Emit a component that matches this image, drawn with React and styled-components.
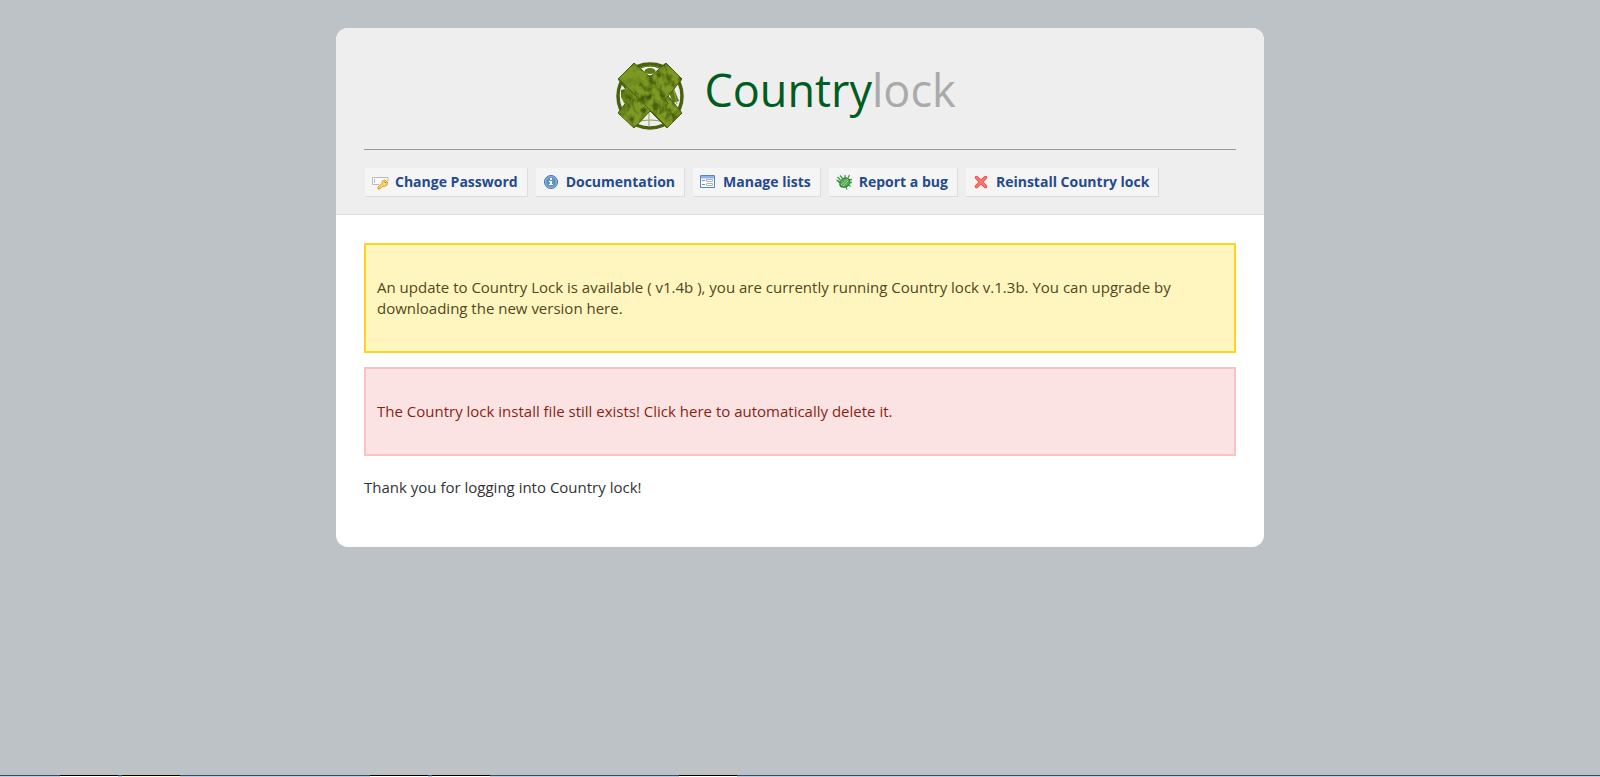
import React from 'react';
import styled, { createGlobalStyle } from 'styled-components';

const GlobalStyle = createGlobalStyle`
  *, *::before, *::after { box-sizing: border-box; }
  body {
    margin: 0;
    background: #bdc2c6;
    color: #333;
    font: 15px/21px "Open Sans", "Noto Sans", sans-serif;
  }
`;

const Page = styled.div`
  min-height: 100vh;
  display: flex;
  flex-direction: column;
  align-items: center;
`;

const Card = styled.main`
  width: 58%;
  min-width: 320px;
  margin: 28px 0;
  border-radius: 12px;
  background: #fff;
  overflow: hidden;
`;

const Header = styled.header`
  padding: 28px 28px 17px;
  background: #eee;
  border-bottom: 1px solid #ddd;
`;

const Brand = styled.a`
  display: flex;
  justify-content: center;
  align-items: center;
  gap: 20px;
  height: 80px;
  margin-bottom: 13px;
  padding-right: 28px;
  text-decoration: none;
`;

const Wordmark = styled.span`
  padding-bottom: 12px;
  font: 45px/64px "Open Sans", sans-serif;
  color: #005c20;
`;

const Muted = styled.span`
  color: #aaa;
`;

const Rule = styled.hr`
  height: 1px;
  margin: 0 0 18px;
  border: 0;
  background: #999;
`;

const Toolbar = styled.nav`
  display: flex;
  flex-wrap: wrap;
  gap: 8px;
  padding-left: 1px;
`;

const ToolLink = styled.a`
  display: flex;
  align-items: center;
  gap: 6px;
  height: 29px;
  padding: 0 9px 0 7px;
  background: #f5f5f5;
  border-right: 1px solid #ddd;
  border-bottom: 1px solid #ddd;
  color: #264a8c;
  font: bold 14px/21px "Open Sans", "DejaVu Sans", sans-serif;
  text-decoration: none;
  white-space: nowrap;
`;

const ToolLabel = styled.span`
  padding-bottom: 2px;
`;

const Content = styled.section`
  padding: 28px;
`;

const tones = {
  notice: { line: '#ffd324', fill: '#fff6bf', ink: '#514721' },
  error: { line: '#fbc2c4', fill: '#fbe3e4', ink: '#8a1f11' },
};

const Alert = styled.div`
  margin-bottom: 14px;
  padding: 32px 11px;
  border: 2px solid ${(p) => tones[p.$tone].line};
  background: ${(p) => tones[p.$tone].fill};
  color: ${(p) => tones[p.$tone].ink};
`;

const AlertText = styled.p`
  margin: 0;
`;

const Greeting = styled.p`
  margin: 21px 0;
`;

const TaskStrip = styled.footer`
  display: flex;
  width: 100%;
  height: 2px;
  margin-top: auto;
  padding-left: 60px;
  background: #b9cde5;
  border-top: 1px solid #3d4c5f;
`;

const TaskTab = styled.span`
  width: 58px;
  height: 2px;
  margin: -1px ${(p) => p.$gap}px 0 0;
  border-top: 1px solid #000;
  background: ${(p) => p.$fill};
`;

const Emblem = () => (
  <svg width="68" height="68" viewBox="0 0 68 68" aria-hidden="true">
    <defs>
      <filter id="grain" x="0" y="0" width="100%" height="100%" colorInterpolationFilters="sRGB">
        <feTurbulence type="fractalNoise" baseFrequency="0.16 0.12" numOctaves="4" seed="5" />
        <feColorMatrix values="0 0 0 0 0.26  0 0 0 0 0.34  0 0 0 0 0.03  2.6 0 0 0 -1.05" />
        <feComposite in2="SourceGraphic" operator="in" result="spots" />
        <feMerge>
          <feMergeNode in="SourceGraphic" />
          <feMergeNode in="spots" />
        </feMerge>
      </filter>
    </defs>
    <circle cx="34" cy="34" r="32" fill="#eee" stroke="#4a610d" strokeWidth="3.5" />
    <ellipse cx="34" cy="9" rx="12" ry="5" fill="#f6f8ef" stroke="#5f7918" strokeWidth="1.5" />
    <ellipse cx="34" cy="9" rx="5.5" ry="3" fill="#5f7918" />
    <path d="M63 39l-5-12-5 4 4 10z" fill="#5d7a13" />
    <path d="M20 60q14-4 28 0M33 50v15M57 24l4 18" fill="none" stroke="#8b9f55" />
    <g filter="url(#grain)">
      <path
        d="M18 1L34 15 50 1 66 17 52 34 66 51 51 66 34 49 18 66 2 51 15 34 2 17z"
        fill="#7c9a24"
        stroke="#4b600f"
      />
      <path d="M5 28l12-2v17l-9-2-3-6z" fill="#67841a" />
    </g>
    <path d="M18 2L31 14 16 30 3 17z" fill="#7c9a24" fillOpacity="0.7" />
    <path d="M3 17L52 66" stroke="#4b600f" />
    <path d="M52 34l-3 4 3 3-2 4" fill="none" stroke="#4b600f" />
  </svg>
);

const PasswordIcon = () => (
  <svg width="17" height="16" viewBox="0 0 17 16" aria-hidden="true">
    <path d="M.5 3.5H16v5L8 11H.5z" fill="#fafafa" />
    <path d="M.5 10.5v-7H16v4M.5 10.5H7M2.5 5v4" fill="none" stroke="#bbb" />
    <path
      d="M10 7.500l2.500-1.500 3 2-.5 3-2.500 1.500-1.500-.5-1.500 1.500-1.500.5v1H6v-2l4-3.500z"
      fill="#fbd565"
      stroke="#d99a35"
    />
    <path d="M12.5 7.5l1.5 1.5" stroke="#a87726" />
  </svg>
);

const InfoIcon = () => (
  <svg width="17" height="16" viewBox="0 0 17 16" aria-hidden="true">
    <circle cx="8" cy="8" r="6.5" fill="#5f93cb" stroke="#4673ab" />
    <circle cx="8" cy="8" r="5.5" fill="none" stroke="#a9c6e6" strokeWidth="0.7" />
    <path d="M7 4h2v2H7zM6 7h3v3h1v1H6v-1h1V8H6z" fill="#fff" />
  </svg>
);

const ListsIcon = () => (
  <svg width="17" height="16" viewBox="0 0 17 16" aria-hidden="true">
    <path d="M.5 1.500h14v12H.5z" fill="#fff" stroke="#5c83bb" />
    <path d="M1 2h13v2.500H1z" fill="#8db3e8" />
    <path d="M2 6.500h3M2 10.500h3" stroke="#5b8fd6" />
    <path d="M6.500 5.500h6v2h-6zM6.500 9.500h6v2h-6z" fill="#fff" stroke="#b4b4b4" />
  </svg>
);

const BugIcon = () => (
  <svg width="17" height="16" viewBox="0 0 17 16" aria-hidden="true">
    <path
      d="M4.500 6L1.500 3M7 5L4 1.500M9 4V1M12 4l1.500-3M13 6l3-.5M13.500 8.500H16M12.500 11l2 1.500M10 13l1 2.500M6 12l-1 1.500M4 9L1 6.500M4 7.500L.5 6"
      stroke="#39a33c"
      strokeWidth="1.3"
      fill="none"
    />
    <path d="M4 12q-1-5 3-7.500 4-2 6.500 1 1.500 4-1.500 6.500-3.500 3-8 0z" fill="#5da65a" stroke="#287a2c" />
    <path d="M5 11l7-6M7 12l5-5" stroke="#9bcf96" />
  </svg>
);

const CrossIcon = () => (
  <svg width="17" height="16" viewBox="0 0 17 16" aria-hidden="true">
    <path d="M3.500 3.500l9 9M12.500 3.500l-9 9" stroke="#ec4341" strokeWidth="3.5" strokeLinecap="round" />
    <path d="M3.500 3.500l9 9M12.500 3.500l-9 9" stroke="#ff7571" strokeWidth="2" strokeLinecap="round" />
  </svg>
);

const tools = [
  { label: 'Change Password', Icon: PasswordIcon },
  { label: 'Documentation', Icon: InfoIcon },
  { label: 'Manage lists', Icon: ListsIcon },
  { label: 'Report a bug', Icon: BugIcon },
  { label: 'Reinstall Country lock', Icon: CrossIcon },
];

const tabs = [
  { fill: '#fff', gap: 4 },
  { fill: '#fffbd0', gap: 190 },
  { fill: '#fff', gap: 4 },
  { fill: '#fff', gap: 189 },
  { fill: '#fff', gap: 0 },
];

export default function App() {
  return (
    <Page>
      <GlobalStyle />
      <Card>
        <Header>
          <Brand href="#home">
            <Emblem />
            <Wordmark>
              Country<Muted>lock</Muted>
            </Wordmark>
          </Brand>
          <Rule />
          <Toolbar>
            {tools.map(({ label, Icon }) => (
              <ToolLink key={label} href="#tool">
                <Icon />
                <ToolLabel>{label}</ToolLabel>
              </ToolLink>
            ))}
          </Toolbar>
        </Header>
        <Content>
          <Alert $tone="notice">
            <AlertText>
              An update to Country Lock is available ( v1.4b ), you are currently running Country lock
              v.1.3b. You can upgrade by downloading the new version here.
            </AlertText>
          </Alert>
          <Alert $tone="error">
            <AlertText>
              The Country lock install file still exists! Click here to automatically delete it.
            </AlertText>
          </Alert>
          <Greeting>Thank you for logging into Country lock!</Greeting>
        </Content>
      </Card>
      <TaskStrip>
        {tabs.map((tab, i) => (
          <TaskTab key={i} $fill={tab.fill} $gap={tab.gap} />
        ))}
      </TaskStrip>
    </Page>
  );
}
